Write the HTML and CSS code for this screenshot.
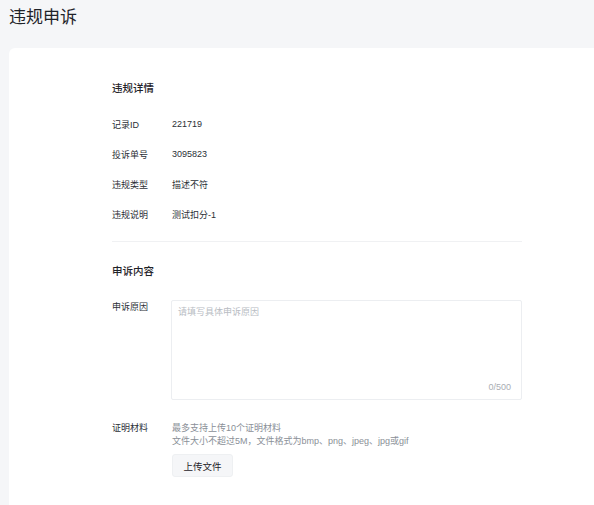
FILE: index.html
```html
<!DOCTYPE html>
<html lang="zh-CN">
<head>
<meta charset="utf-8">
<title>违规申诉</title>
<link rel="stylesheet" href="styles.css">
</head>
<body>
<header class="page-head">
  <h1 class="page-title">违规申诉</h1>
</header>
<main class="card">
  <div class="content">
    <section class="section">
      <h2 class="section-title">违规详情</h2>
      <div class="rows">
        <div class="row"><span class="label">记录ID</span><span class="value">221719</span></div>
        <div class="row"><span class="label">投诉单号</span><span class="value">3095823</span></div>
        <div class="row"><span class="label">违规类型</span><span class="value">描述不符</span></div>
        <div class="row"><span class="label">违规说明</span><span class="value">测试扣分-1</span></div>
      </div>
    </section>
    <div class="divider"></div>
    <section class="section">
      <h2 class="section-title second">申诉内容</h2>
      <div class="field">
        <span class="label field-label">申诉原因</span>
        <div class="textarea-wrap">
          <div class="placeholder">请填写具体申诉原因</div>
          <span class="counter">0/500</span>
        </div>
      </div>
      <div class="field upload-field">
        <span class="label field-label">证明材料</span>
        <div class="upload">
          <div class="hint">最多支持上传10个证明材料</div>
          <div class="hint">文件大小不超过5M，文件格式为bmp、png、jpeg、jpg或gif</div>
          <button class="btn" type="button">上传文件</button>
        </div>
      </div>
    </section>
  </div>
</main>
</body>
</html>
```

FILE: styles.css
```css
* { box-sizing: border-box; }
html, body { margin: 0; padding: 0; }
body {
  background: #f5f6f8;
  font-family: "Liberation Sans", "Noto Sans CJK SC", sans-serif;
  color: #1f2329;
  overflow: hidden;
}
.page-head {
  height: 48px;
  padding: 6px 0 0 9px;
}
.page-title {
  margin: 0;
  font-size: 17px;
  line-height: 24px;
  font-weight: 400;
  color: #1f2329;
}
.card {
  background: #ffffff;
  margin-left: 9px;
  margin-right: -20px;
  border-radius: 6px 0 0 0;
  min-height: 470px;
  padding: 32px 0 0 103px;
}
.content { width: 410px; }
.section-title {
  margin: 0;
  font-size: 10.5px;
  line-height: 16px;
  font-weight: 500;
  color: #1f2329;
}
.rows { margin-top: 13px; }
.row {
  display: flex;
  align-items: center;
  height: 30px;
  font-size: 9px;
}
.label {
  width: 60px;
  flex: none;
  font-size: 9px;
  color: #2b2f36;
}
.value { color: #2b2f36; }
.divider {
  height: 1px;
  background: #f0f1f3;
  margin-top: 12px;
}
.section-title.second { margin-top: 21px; }
.field {
  display: flex;
  align-items: flex-start;
  margin-top: 21px;
}
.field-label { line-height: 14px; }
.textarea-wrap {
  position: relative;
  width: 351px;
  height: 100px;
  margin-left: -1px;
  border: 1px solid #eceef1;
  border-radius: 2px;
  padding: 4px 6px;
}
.placeholder {
  font-size: 9px;
  line-height: 14px;
  color: #b8bcc3;
}
.counter {
  position: absolute;
  right: 10px;
  bottom: 6px;
  font-size: 9px;
  line-height: 12px;
  color: #a9adb3;
}
.upload-field { margin-top: 22px; }
.upload-field .field-label { line-height: 13px; }
.upload {
  display: flex;
  flex-direction: column;
  align-items: flex-start;
}
.hint {
  font-size: 9px;
  line-height: 13px;
  color: #8a8f97;
}
.btn {
  margin-top: 6px;
  width: 61px;
  height: 23px;
  padding: 0;
  border: 1px solid #eef0f2;
  border-radius: 3px;
  background: #f5f6f8;
  font-family: inherit;
  font-size: 9.5px;
  color: #1f2329;
}
```
